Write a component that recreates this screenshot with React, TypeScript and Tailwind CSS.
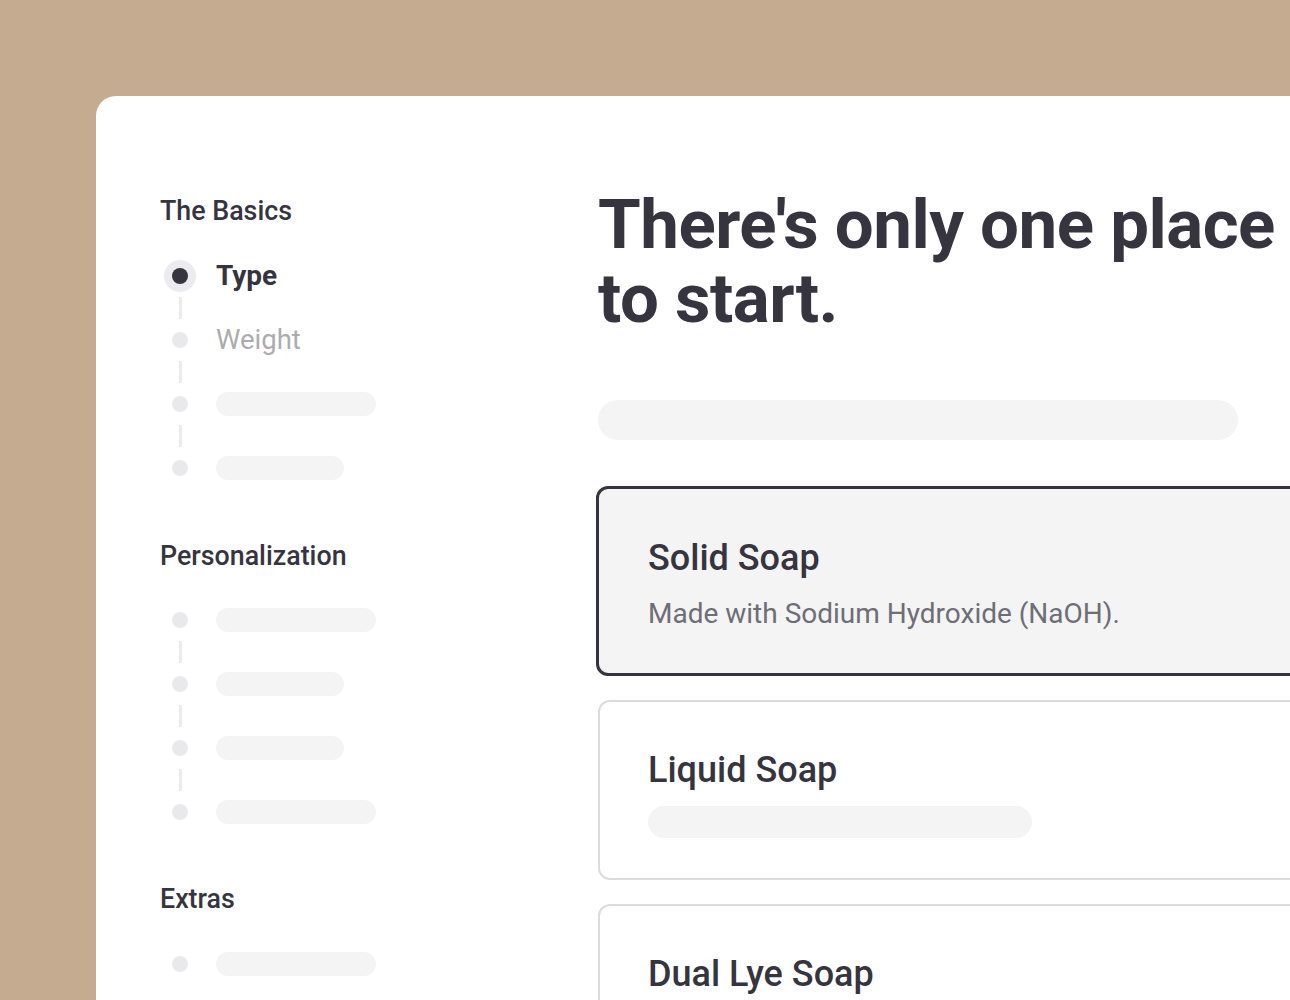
import React from "react";

const font = { fontFamily: "Roboto, 'Liberation Sans', sans-serif" };

function Dot({ active }: { active?: boolean }) {
  if (active) {
    return (
      <div className="flex h-8 w-8 items-center justify-center rounded-full bg-[#ececf0]">
        <div className="h-4 w-4 rounded-full bg-[#35343f]" />
      </div>
    );
  }
  return (
    <div className="flex h-8 w-8 items-center justify-center">
      <div className="h-4 w-4 rounded-full bg-[#e9e9ec]" />
    </div>
  );
}

type Step = { label?: string; active?: boolean; bar?: number };

function Steps({ steps }: { steps: Step[] }) {
  return (
    <div className="ml-[4px] flex flex-col">
      {steps.map((s, i) => (
        <div key={i} className="flex flex-col">
          {i > 0 && (
            <div className="flex h-8 w-8 items-center justify-center">
              <div className="h-[22px] w-[3px] bg-[#ececee]" />
            </div>
          )}
          <div className="flex h-8 items-center gap-[20px]">
            <Dot active={s.active} />
            {s.label ? (
              <span
                className={
                  s.active
                    ? "text-[28px] font-bold leading-8 text-[#35343f]"
                    : "text-[27.5px] font-normal leading-8 text-[#acacb0]"
                }
              >
                {s.label}
              </span>
            ) : (
              <div
                className={
                  s.bar === 160
                    ? "h-6 w-[160px] rounded-full bg-[#f4f4f4]"
                    : "h-6 w-[128px] rounded-full bg-[#f4f4f4]"
                }
              />
            )}
          </div>
        </div>
      ))}
    </div>
  );
}

export default function App() {
  return (
    <div
      className="h-[1000px] w-[1290px] overflow-hidden bg-[#c5ab8f] pl-[96px] pt-[96px]"
      style={font}
    >
      <div className="flex h-[1100px] w-[1300px] rounded-tl-[20px] bg-white pl-[64px] pt-[98px]">
        <aside className="flex w-[438px] shrink-0 flex-col pt-[1px]">
          <h3 className="text-[26.8px] font-medium leading-8 text-[#35343f]">The Basics</h3>
          <div className="mt-[33px]">
            <Steps
              steps={[
                { label: "Type", active: true },
                { label: "Weight" },
                { bar: 160 },
                { bar: 128 },
              ]}
            />
          </div>
          <h3 className="mt-[56px] text-[26.8px] font-medium leading-8 text-[#35343f]">
            Personalization
          </h3>
          <div className="mt-[32px]">
            <Steps steps={[{ bar: 160 }, { bar: 128 }, { bar: 128 }, { bar: 160 }]} />
          </div>
          <h3 className="mt-[55px] text-[26.8px] font-medium leading-8 text-[#35343f]">Extras</h3>
          <div className="mt-[33px]">
            <Steps steps={[{ bar: 160 }]} />
          </div>
        </aside>
        <main className="-mt-[6px] flex flex-1 flex-col">
          <h1 className="text-[69px] font-bold leading-[74px] tracking-[-0.5px] text-[#35343f]">
            There's only one place
            <br />
            to start.
          </h1>
          <div className="mt-[64px] h-10 w-[640px] rounded-full bg-[#f4f4f4]" />
          <div className="mt-[46px] flex flex-col gap-6">
            <div className="-ml-[2px] flex h-[190px] flex-col rounded-[12px] border-[3px] border-[#35343f] bg-[#f4f4f4] pl-[49px] pt-[49px]">
              <h2 className="text-[36px] font-medium leading-[40px] text-[#35343f]">Solid Soap</h2>
              <p className="mt-[20px] text-[28px] leading-8 text-[#6e6e76]">
                Made with Sodium Hydroxide (NaOH).
              </p>
            </div>
            <div className="flex h-[180px] flex-col rounded-[12px] border-2 border-[#dcdcdc] bg-white pl-[48px] pt-[48px]">
              <h2 className="text-[36px] font-medium leading-[40px] text-[#35343f]">Liquid Soap</h2>
              <div className="mt-[16px] h-8 w-[384px] rounded-full bg-[#f4f4f4]" />
            </div>
            <div className="flex h-[180px] flex-col rounded-[12px] border-2 border-[#dcdcdc] bg-white pl-[48px] pt-[48px]">
              <h2 className="text-[36px] font-medium leading-[40px] text-[#35343f]">Dual Lye Soap</h2>
            </div>
          </div>
        </main>
      </div>
    </div>
  );
}
